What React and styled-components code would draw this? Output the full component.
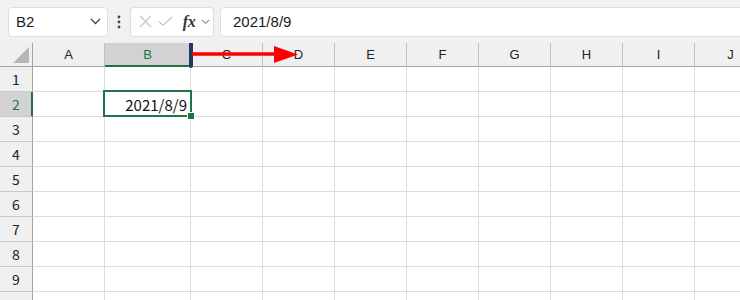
import styled, { createGlobalStyle } from 'styled-components'

const GREEN = '#217346'
const COLS = ['A', 'B', 'C', 'D', 'E', 'F', 'G', 'H', 'I', 'J']
const ROWS = [1, 2, 3, 4, 5, 6, 7, 8, 9, '']

const Global = createGlobalStyle`
   html, body {
      margin: 0;
      padding: 0;
      width: 740px;
      height: 300px;
      overflow: hidden;
      background: #ffffff;
      font-family: "Noto Sans CJK JP", "Noto Sans", sans-serif;
   }
`

//상단 수식 입력줄
const Toolbar = styled.div`
   display: flex;
   align-items: center;
   height: 43px;
   padding: 0 0 0 8px;
   box-sizing: border-box;
   background: #f1f1f2;
`

const Box = styled.div`
   display: flex;
   align-items: center;
   height: 30px;
   background: #ffffff;
   border: 1px solid #dedede;
   border-radius: 4px;
   box-sizing: border-box;
`

const NameBox = styled(Box)`
   width: 100px;
   padding: 0 6px 0 7px;
   justify-content: space-between;
   font-family: "Liberation Sans", sans-serif;
   font-size: 15px;
   color: #1a1a1a;
`

const Dots = styled.div`
   width: 22px;
   display: flex;
   justify-content: center;
   svg { display: block; }
`

const ButtonsBox = styled(Box)`
   width: 84px;
   padding: 0 0 0 7px;
`

const IconSlot = styled.div`
   width: ${(p) => p.$w}px;
   display: flex;
   align-items: center;
   justify-content: center;
   svg { display: block; }
`

const Fx = styled.span`
   font-family: "Liberation Serif", serif;
   font-style: italic;
   font-weight: bold;
   font-size: 16px;
   color: #333;
   letter-spacing: -0.5px;
`

const FormulaInput = styled(Box)`
   flex: 1;
   margin-left: 6px;
   margin-right: -10px;
   padding-left: 12px;
   font-family: "Liberation Sans", sans-serif;
   font-size: 15px;
   color: #1a1a1a;
`

//시트 그리드
const Sheet = styled.div`
   position: relative;
   display: grid;
   grid-template-columns: 33px 72px 86px repeat(8, 72px);
   grid-template-rows: 24px repeat(10, 25px);
   width: 740px;
   overflow: hidden;
`

const Corner = styled.div`
   position: relative;
   background: #f0f0f0;
   border-right: 1px solid #a6a6a6;
   border-bottom: 1px solid #a6a6a6;
   box-sizing: border-box;
   &::after {
      content: '';
      position: absolute;
      right: 3px;
      bottom: 3px;
      width: 0;
      height: 0;
      border-left: 16px solid transparent;
      border-bottom: 16px solid #b7b7b7;
   }
`

const ColHead = styled.div`
   display: flex;
   align-items: center;
   justify-content: center;
   background: ${(p) => (p.$active ? '#d2d2d2' : '#f0f0f0')};
   color: ${(p) => (p.$active ? GREEN : '#222')};
   border-right: 1px solid #c0c0c0;
   border-bottom: ${(p) => (p.$active ? `2px solid ${GREEN}` : '1px solid #a6a6a6')};
   box-sizing: border-box;
   font-family: "Liberation Sans", sans-serif;
   font-size: 13px;
   padding-bottom: ${(p) => (p.$active ? '0' : '1px')};
`

const RowHead = styled.div`
   display: flex;
   align-items: center;
   justify-content: center;
   background: ${(p) => (p.$active ? '#d2d2d2' : '#f0f0f0')};
   color: ${(p) => (p.$active ? GREEN : '#222')};
   border-right: ${(p) => (p.$active ? `2px solid ${GREEN}` : '1px solid #a6a6a6')};
   border-bottom: 1px solid #c8c8c8;
   box-sizing: border-box;
   font-family: "Noto Sans CJK JP", sans-serif;
   font-size: 14px;
   padding-left: ${(p) => (p.$active ? '1px' : '0')};
`

const Cell = styled.div`
   position: relative;
   z-index: ${(p) => (p.$selected ? 2 : 'auto')};
   border-right: 1px solid #dcdcdc;
   border-bottom: 1px solid #dcdcdc;
   box-sizing: border-box;
   display: flex;
   align-items: center;
   justify-content: flex-end;
   padding-right: 3px;
   font-family: "Noto Sans CJK JP", sans-serif;
   font-size: 15px;
   color: #111;
`

const Selection = styled.div`
   position: absolute;
   left: -2px;
   top: -2px;
   right: -2px;
   bottom: -1px;
   border: 2px solid ${GREEN};
   pointer-events: none;
`

const Handle = styled.div`
   position: absolute;
   right: -5px;
   bottom: -5px;
   width: 6px;
   height: 6px;
   background: ${GREEN};
   border: 1px solid #ffffff;
`

//주석: 열 너비 화살표
const WidthBar = styled.div`
   position: absolute;
   z-index: 3;
   left: 189px;
   top: -3px;
   width: 4px;
   height: 28px;
   background: #1f3864;
   border-radius: 2px;
`

const Arrow = styled.svg`
   position: absolute;
   z-index: 3;
   left: 192px;
   top: 0px;
`

function Chevron() {
   return (
      <svg width="11" height="7" viewBox="0 0 11 7">
         <path d="M1 1 L5.5 5.5 L10 1" fill="none" stroke="#444" strokeWidth="1.3" />
      </svg>
   )
}

export default function App() {
   return (
      <>
         <Global />
         <Toolbar>
            <NameBox>
               <span>B2</span>
               <Chevron />
            </NameBox>
            <Dots>
               <svg width="4" height="14" viewBox="0 0 4 14">
                  <circle cx="2" cy="2" r="1.4" fill="#444" />
                  <circle cx="2" cy="7" r="1.4" fill="#444" />
                  <circle cx="2" cy="12" r="1.4" fill="#444" />
               </svg>
            </Dots>
            <ButtonsBox>
               <IconSlot $w={14}>
                  <svg width="13" height="13" viewBox="0 0 13 13">
                     <path d="M1 1 L12 12 M12 1 L1 12" stroke="#c4c4c4" strokeWidth="1.2" />
                  </svg>
               </IconSlot>
               <IconSlot $w={26}>
                  <svg width="15" height="11" viewBox="0 0 15 11">
                     <path d="M1 5.5 L5 9.5 L14 1" fill="none" stroke="#c4c4c4" strokeWidth="1.2" />
                  </svg>
               </IconSlot>
               <IconSlot $w={22}>
                  <Fx>fx</Fx>
               </IconSlot>
               <IconSlot $w={10}>
                  <svg width="9" height="6" viewBox="0 0 9 6">
                     <path d="M1 1 L4.5 4.5 L8 1" fill="none" stroke="#999" strokeWidth="1.1" />
                  </svg>
               </IconSlot>
            </ButtonsBox>
            <FormulaInput>2021/8/9</FormulaInput>
         </Toolbar>
         <Sheet>
            <Corner />
            {COLS.map((c) => (
               <ColHead key={c} $active={c === 'B'}>{c}</ColHead>
            ))}
            {ROWS.map((r, i) => (
               <Row key={i} r={r} />
            ))}
            <WidthBar />
            <Arrow width="110" height="22" viewBox="0 0 110 22">
               <path d="M0 11 H84" stroke="#ff0000" strokeWidth="3.5" />
               <path d="M82 3 L106 11.5 L82 20 Z" fill="#ff0000" />
            </Arrow>
         </Sheet>
      </>
   )
}

function Row({ r }) {
   return (
      <>
         <RowHead $active={r === 2}>{r}</RowHead>
         {COLS.map((c) => {
            const selected = r === 2 && c === 'B'
            return (
               <Cell key={c} $selected={selected}>
                  {selected && (
                     <>
                        2021/8/9
                        <Selection>
                           <Handle />
                        </Selection>
                     </>
                  )}
               </Cell>
            )
         })}
      </>
   )
}
